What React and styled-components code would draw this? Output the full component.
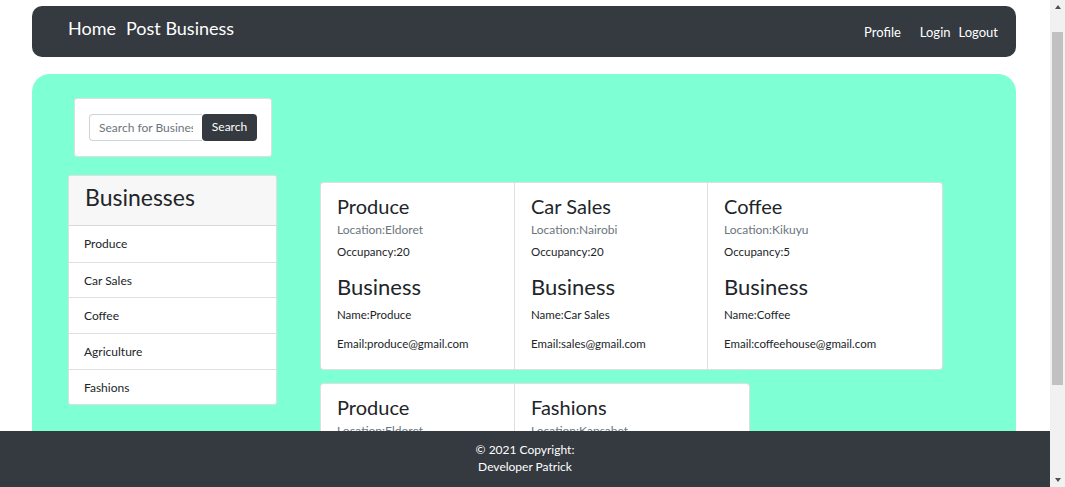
import React from 'react';
import styled, { createGlobalStyle } from 'styled-components';

const GlobalStyle = createGlobalStyle`
	html, body {
		margin: 0;
		padding: 0;
		background: #fff;
		font-family: Lato, "Open Sans", sans-serif;
		color: #212529;
	}
`;

const Page = styled.div`
	padding: 6px 49px 31px 32px;
`;

const Navbar = styled.nav`
	height: 51px;
	background: #343a40;
	border-radius: 10px;
	display: flex;
	align-items: center;
	justify-content: space-between;
	padding: 0 18px 0 36px;
`;

const NavGroup = styled.div`
	display: flex;
	align-items: center;
	gap: ${props => props.gap || 10}px;
	margin-top: ${props => props.offset || 0}px;
`;

const NavLink = styled.a`
	color: #fff;
	font-size: ${props => props.size || 13}px;
	text-decoration: none;
	margin-right: ${props => props.extra || 0}px;
`;

const Green = styled.main`
	margin-top: 17px;
	background: aquamarine;
	border-radius: 18px;
	min-height: 526px;
	box-sizing: border-box;
	display: flex;
	align-items: flex-start;
	padding: 24px 0 0 36px;
`;

const Sidebar = styled.aside`
	width: 209px;
	display: flex;
	flex-direction: column;
`;

const SearchCard = styled.form`
	margin: 0 5px 0 6px;
	background: #fff;
	border: 1px solid rgba(0, 0, 0, 0.125);
	border-radius: 3px;
	padding: 15px 14px 15px 14px;
	display: flex;
`;

const SearchInput = styled.input`
	width: 113px;
	height: 27px;
	box-sizing: border-box;
	border: 1px solid #ced4da;
	border-right: none;
	border-radius: 4px 0 0 4px;
	padding: 0 9px;
	font-family: inherit;
	font-size: 12px;
	color: #6c757d;
	outline: none;
	&::placeholder { color: #6c757d; }
`;

const SearchButton = styled.button`
	width: 55px;
	height: 27px;
	border: none;
	border-radius: 4px;
	background: #343a40;
	color: #fff;
	font-family: inherit;
	font-size: 12px;
	padding: 0 0 3px;
`;

const List = styled.ul`
	list-style: none;
	margin: 18px 0 0;
	padding: 0;
	background: #fff;
	border: 1px solid rgba(0, 0, 0, 0.125);
	border-radius: 3px;
	overflow: hidden;
`;

const ListHeader = styled.li`
	height: 50px;
	background: #f7f7f7;
	border-bottom: 1px solid rgba(0, 0, 0, 0.125);
	padding: 7px 0 0 16px;
	box-sizing: border-box;
	font-size: 23px;
`;

const ListItem = styled.li`
	height: 35.7px;
	box-sizing: border-box;
	display: flex;
	align-items: center;
	padding: 0 15px;
	font-size: 12px;
	border-top: ${props => (props.first ? 'none' : '1px solid rgba(0, 0, 0, 0.125)')};
`;

const Cards = styled.section`
	margin-left: 43px;
	padding-top: 84px;
	display: flex;
	flex-direction: column;
	gap: 13px;
`;

const CardGroup = styled.div`
	display: flex;
	background: #fff;
	border: 1px solid rgba(0, 0, 0, 0.125);
	border-radius: 4px;
	align-self: flex-start;
`;

const Card = styled.article`
	width: ${props => props.width}px;
	box-sizing: border-box;
	padding: 11px 16px 17px;
	border-left: ${props => (props.first ? 'none' : '1px solid rgba(0, 0, 0, 0.125)')};
`;

const Title = styled.h5`
	margin: 0;
	font-size: 20px;
	font-weight: 400;
	line-height: 24px;
`;

const Location = styled.p`
	margin: 4px 0 0;
	font-size: 12px;
	color: #6c757d;
	line-height: 16px;
`;

const Line = styled.p`
	margin: ${props => props.top || 0}px 0 0;
	font-size: 11.5px;
	line-height: 16px;
`;

const Subtitle = styled.h4`
	margin: 14px 0 0;
	font-size: 22px;
	font-weight: 400;
	line-height: 26px;
`;

const Footer = styled.footer`
	position: fixed;
	left: 0;
	right: 15px;
	bottom: 0;
	height: 56px;
	background: #343a40;
	color: #fff;
	font-size: 12px;
	display: flex;
	flex-direction: column;
	align-items: center;
	justify-content: center;
	line-height: 17px;
	padding-bottom: 3px;
	box-sizing: border-box;
`;

/* the window's scrollbar, drawn because the headless browser hides it */
const ScrollTrack = styled.div`
	position: fixed;
	top: 0;
	right: 0;
	bottom: 0;
	width: 15px;
	background: #f1f1f1;
	display: flex;
	flex-direction: column;
	align-items: center;
	justify-content: space-between;
`;

const ScrollArrow = styled.div`
	width: 0;
	height: 0;
	margin: 5px 0;
	border-left: 3.5px solid transparent;
	border-right: 3.5px solid transparent;
	border-${props => (props.down ? 'top' : 'bottom')}: 4px solid #505050;
`;

const ScrollThumb = styled.div`
	position: absolute;
	top: 32px;
	left: 2px;
	width: 11px;
	height: 353px;
	background: #c1c1c1;
`;

const businesses = [
	{ name: 'Produce', location: 'Eldoret', occupancy: 20, email: 'produce@gmail.com', width: 193 },
	{ name: 'Car Sales', location: 'Nairobi', occupancy: 20, email: 'sales@gmail.com', width: 193 },
	{ name: 'Coffee', location: 'Kikuyu', occupancy: 5, email: 'coffeehouse@gmail.com', width: 235 },
	{ name: 'Produce', location: 'Eldoret', occupancy: 20, email: 'produce@gmail.com', width: 193 },
	{ name: 'Fashions', location: 'Kapsabet', occupancy: 10, email: 'fashions@gmail.com', width: 235 },
];

const categories = ['Produce', 'Car Sales', 'Coffee', 'Agriculture', 'Fashions'];

const BusinessCard = ({ item, first }) => (
	<Card width={item.width} first={first}>
		<Title>{item.name}</Title>
		<Location>Location:{item.location}</Location>
		<Line top={6}>Occupancy:{item.occupancy}</Line>
		<Subtitle>Business</Subtitle>
		<Line top={7}>Name:{item.name}</Line>
		<Line top={13}>Email:{item.email}</Line>
	</Card>
);

export default function App() {
	const rows = [businesses.slice(0, 3), businesses.slice(3)];

	return (
		<>
			<GlobalStyle />
			<Page>
				<Navbar>
					<NavGroup gap={10} offset={-8}>
						<NavLink size={18}>Home</NavLink>
						<NavLink size={18}>Post Business</NavLink>
					</NavGroup>
					<NavGroup gap={8} offset={1}>
						<NavLink extra={11}>Profile</NavLink>
						<NavLink>Login</NavLink>
						<NavLink>Logout</NavLink>
					</NavGroup>
				</Navbar>
				<Green>
					<Sidebar>
						<SearchCard onSubmit={e => e.preventDefault()}>
							<SearchInput placeholder="Search for Business" />
							<SearchButton>Search</SearchButton>
						</SearchCard>
						<List>
							<ListHeader>Businesses</ListHeader>
							{categories.map((c, i) => (
								<ListItem key={c} first={i === 0}>{c}</ListItem>
							))}
						</List>
					</Sidebar>
					<Cards>
						{rows.map((row, r) => (
							<CardGroup key={r}>
								{row.map((item, i) => (
									<BusinessCard key={i} item={item} first={i === 0} />
								))}
							</CardGroup>
						))}
					</Cards>
				</Green>
			</Page>
			<Footer>
				<span>© 2021 Copyright:</span>
				<span>Developer Patrick</span>
			</Footer>
			<ScrollTrack>
				<ScrollArrow />
				<ScrollThumb />
				<ScrollArrow down />
			</ScrollTrack>
		</>
	);
}
